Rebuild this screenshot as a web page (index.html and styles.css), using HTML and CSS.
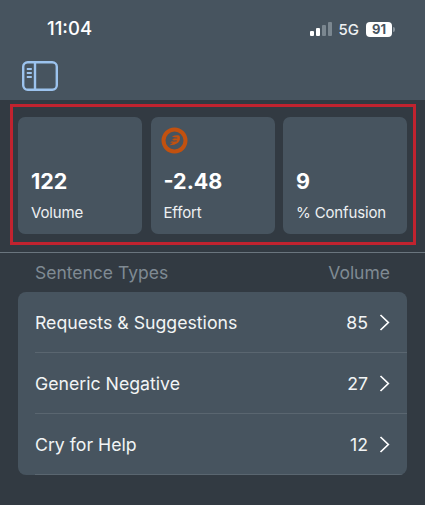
FILE: index.html
```html
<!DOCTYPE html>
<html lang="en">
<head>
<meta charset="utf-8">
<title>Sentence Types</title>
<link rel="stylesheet" href="styles.css">
</head>
<body>
<header class="top">
  <div class="status">
    <span class="time">11:04</span>
    <div class="status-right">
      <svg class="signal" width="22" height="14" viewBox="0 0 22 14">
        <rect x="0" y="9" width="4" height="5" rx="1" fill="#fff"/>
        <rect x="6" y="6" width="4" height="8" rx="1" fill="#fff"/>
        <rect x="12" y="3" width="4" height="11" rx="1" fill="#7b8790"/>
        <rect x="18" y="0" width="4" height="14" rx="1" fill="#7b8790"/>
      </svg>
      <span class="net">5G</span>
      <span class="battery"><span class="battery-level">91</span><span class="battery-tip"></span></span>
    </div>
  </div>
  <div class="toolbar">
    <svg width="36" height="30" viewBox="0 0 36 30" fill="none" stroke="#9cc3ee" stroke-width="2.400">
      <rect x="1.200" y="1.200" width="33.600" height="27.600" rx="4.500"/>
      <path d="M13 1.200v27.600"/>
      <path d="M4.800 8h5M4.800 12h5M4.800 16h5" stroke-width="1.800"/>
    </svg>
  </div>
</header>
<main>
  <section class="highlight">
    <div class="card">
      <div class="value">122</div>
      <div class="label">Volume</div>
    </div>
    <div class="card">
      <svg class="badge" width="27" height="27" viewBox="0 0 27 27">
        <circle cx="13.500" cy="13.500" r="11" fill="none" stroke="#c2510f" stroke-width="4"/>
        <path d="M11 9.500 C13.500 8.300 16.500 8 18.500 8.800 C19.500 11 19 14 17 15.800 C15 17.500 11.500 18.300 8.300 18.300 L12 15.800 L9 15.500 L13 13 L11 12.500 L14 10.800 Z" fill="#c2510f"/>
        <path d="M12.500 10.800 L16.300 11" fill="none" stroke="#47545f" stroke-width="1"/>
        <path d="M11.500 14.200 L15.800 13.800" fill="none" stroke="#47545f" stroke-width="1"/>
      </svg>
      <div class="value">-2.48</div>
      <div class="label">Effort</div>
    </div>
    <div class="card">
      <div class="value">9</div>
      <div class="label">% Confusion</div>
    </div>
  </section>
  <hr class="divider">
  <div class="section-head"><span>Sentence Types</span><span>Volume</span></div>
  <ul class="list">
    <li class="row"><span class="row-title">Requests &amp; Suggestions</span><span class="row-num">85</span><svg class="chev" width="11" height="17" viewBox="0 0 11 17" fill="none" stroke="#fff" stroke-width="1.700"><path d="M1.500 1l7.800 7.500-7.800 7.500"/></svg></li>
    <li class="row"><span class="row-title">Generic Negative</span><span class="row-num">27</span><svg class="chev" width="11" height="17" viewBox="0 0 11 17" fill="none" stroke="#fff" stroke-width="1.700"><path d="M1.500 1l7.800 7.500-7.800 7.500"/></svg></li>
    <li class="row"><span class="row-title">Cry for Help</span><span class="row-num">12</span><svg class="chev" width="11" height="17" viewBox="0 0 11 17" fill="none" stroke="#fff" stroke-width="1.700"><path d="M1.500 1l7.800 7.500-7.800 7.500"/></svg></li>
  </ul>
</main>
</body>
</html>
```
FILE: styles.css
```css
* { box-sizing: border-box; }
html, body { margin: 0; padding: 0; }
body {
  width: 425px;
  height: 505px;
  overflow: hidden;
  background: #323a42;
  color: #fff;
  font-family: Inter, "Liberation Sans", sans-serif;
}
.top {
  height: 100px;
  background: #47545f;
  padding: 17px 0 0 0;
}
.status {
  display: flex;
  justify-content: space-between;
  align-items: center;
  height: 22px;
  padding: 0 30px 0 47px;
}
.time { font-size: 18.500px; font-weight: 500; }
.status-right { display: flex; align-items: center; padding-top: 2px; }
.signal { margin-right: 7px; }
.net { font-size: 15px; font-weight: 500; margin-right: 7px; color: #eef0f2; }
.battery { display: flex; align-items: center; }
.battery-level {
  width: 26px;
  height: 15px;
  background: #fff;
  border-radius: 4px;
  color: #47545f;
  font-size: 13px;
  font-weight: 700;
  line-height: 15px;
  text-align: center;
}
.battery-tip {
  width: 2px;
  height: 5px;
  margin-left: 1px;
  background: #87929b;
  border-radius: 0 2px 2px 0;
}
.toolbar { padding: 22px 0 0 22px; }
.toolbar svg { display: block; }
.highlight {
  margin: 4px 9px 0 10px;
  height: 141px;
  border: 3px solid #c1232f;
  padding: 10px 6px 8px 5px;
  display: grid;
  grid-template-columns: repeat(3, 124px);
  column-gap: 8.500px;
}
.card {
  position: relative;
  background: #47545f;
  border-radius: 7px;
  padding: 50px 13px 0;
}
.badge { position: absolute; left: 10px; top: 10px; }
.value { font-size: 21.500px; font-weight: 700; line-height: 28px; }
.label { font-size: 15px; letter-spacing: -0.150px; line-height: 20px; margin-top: 8px; color: #eef0f2; }
.divider { border: 0; height: 1px; background: #6a757e; margin: 7px 0 0; }
.section-head {
  display: flex;
  justify-content: space-between;
  padding: 0 35px;
  height: 39px;
  align-items: center;
  font-size: 17.500px;
  color: #7f8a93;
}
.list {
  list-style: none;
  margin: 0 18px;
  padding: 0;
  width: 389px;
  background: #47545f;
  border-radius: 8px;
  overflow: hidden;
}
.row {
  display: flex;
  align-items: center;
  height: 61px;
  margin-left: 17px;
  padding: 1px 17px 0 0;
  border-bottom: 1px solid #5a6670;
  font-size: 17.700px;
  color: #f2f4f5;
}
.row-title { flex: 1; }
.row-num { margin-right: 11px; }
.chev { display: block; }
```
